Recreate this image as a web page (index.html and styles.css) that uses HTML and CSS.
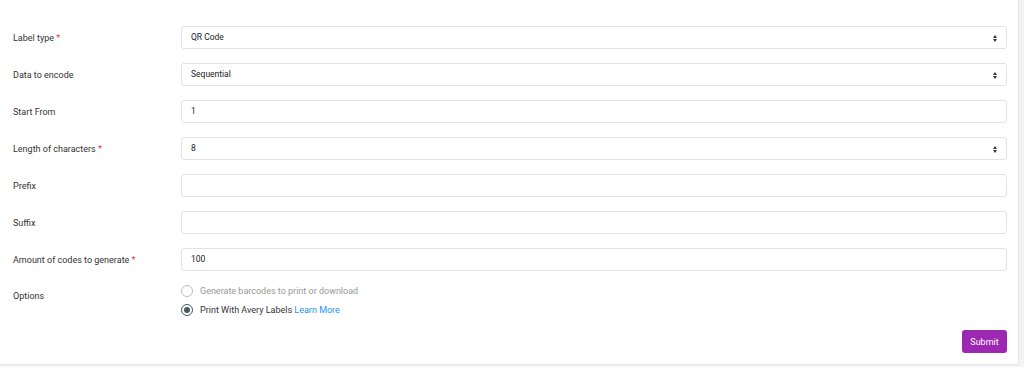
FILE: index.html
```html
<!DOCTYPE html>
<html lang="en">
<head>
  <meta charset="UTF-8" />
  <title>Generate Codes</title>
  <link rel="stylesheet" href="styles.css">
</head>
<body>
  <div class="card">
    <form class="form">
      <div class="row">
        <label class="label">Label type <span class="req">*</span></label>
        <div class="field select">QR Code<span class="arrows"></span></div>
      </div>
      <div class="row">
        <label class="label">Data to encode</label>
        <div class="field select">Sequential<span class="arrows"></span></div>
      </div>
      <div class="row">
        <label class="label">Start From</label>
        <div class="field">1</div>
      </div>
      <div class="row">
        <label class="label">Length of characters <span class="req">*</span></label>
        <div class="field select">8<span class="arrows"></span></div>
      </div>
      <div class="row">
        <label class="label">Prefix</label>
        <div class="field"></div>
      </div>
      <div class="row">
        <label class="label">Suffix</label>
        <div class="field"></div>
      </div>
      <div class="row">
        <label class="label">Amount of codes to generate <span class="req">*</span></label>
        <div class="field">100</div>
      </div>
      <div class="row options-row">
        <label class="label">Options</label>
        <div class="options">
          <div class="option disabled"><span class="radio"></span>Generate barcodes to print or download</div>
          <div class="option"><span class="radio checked"></span>Print With Avery Labels&nbsp;<a href="#" class="link">Learn More</a></div>
        </div>
      </div>
      <div class="actions">
        <button type="button" class="submit">Submit</button>
      </div>
    </form>
  </div>
</body>
</html>
```
FILE: styles.css
```css
* {
  box-sizing: border-box;
  margin: 0;
  padding: 0;
}

body {
  font-family: Roboto, 'Liberation Sans', sans-serif;
  background: #f3f3f3;
  color: #333;
  width: 1024px;
  height: 367px;
  overflow: hidden;
}

.card {
  width: 1019px;
  height: 365px;
  background: #fff;
  border-right: 1px solid #e4e4e4;
  border-bottom: 1px solid #e4e4e4;
  padding: 26px 11px 0 13px;
}

.row {
  display: flex;
  align-items: center;
  height: 23px;
  margin-bottom: 14px;
}

.label {
  width: 168px;
  font-size: 9px;
  color: #333;
}

.req {
  color: #e53935;
}

.field {
  flex: 1;
  height: 23px;
  border: 1px solid #e3e3e3;
  border-radius: 3px;
  padding: 0 9px;
  font-size: 8.5px;
  line-height: 21px;
  color: #222;
  position: relative;
}

.arrows {
  position: absolute;
  right: 8px;
  top: 7.5px;
  width: 5px;
  height: 7px;
}

.arrows::before,
.arrows::after {
  content: "";
  position: absolute;
  left: 0;
  border-left: 2.5px solid transparent;
  border-right: 2.5px solid transparent;
}

.arrows::before {
  top: 0;
  border-bottom: 3px solid #333;
}

.arrows::after {
  bottom: 0;
  border-top: 3px solid #333;
}

.options-row {
  height: auto;
  align-items: flex-start;
  margin-bottom: 0;
  margin-top: -1px;
}

.options-row .label {
  padding-top: 7px;
}

.options {
  display: flex;
  flex-direction: column;
  gap: 6px;
}

.option {
  display: flex;
  align-items: center;
  font-size: 9px;
  color: #333;
  height: 13px;
}

.option.disabled {
  color: #999;
}

.radio {
  width: 12px;
  height: 12px;
  border: 1px solid #bbb;
  border-radius: 50%;
  margin-right: 7px;
  position: relative;
}

.radio.checked {
  border-color: #455a64;
}

.radio.checked::after {
  content: "";
  position: absolute;
  left: 2px;
  top: 2px;
  width: 6px;
  height: 6px;
  border-radius: 50%;
  background: #455a64;
}

.link {
  color: #2196f3;
  text-decoration: none;
}

.actions {
  display: flex;
  justify-content: flex-end;
  margin-top: 14px;
}

.submit {
  background: #9c27b0;
  color: #fff;
  border: none;
  border-radius: 3px;
  width: 45px;
  height: 23px;
  font-family: inherit;
  font-size: 9px;
}
```
